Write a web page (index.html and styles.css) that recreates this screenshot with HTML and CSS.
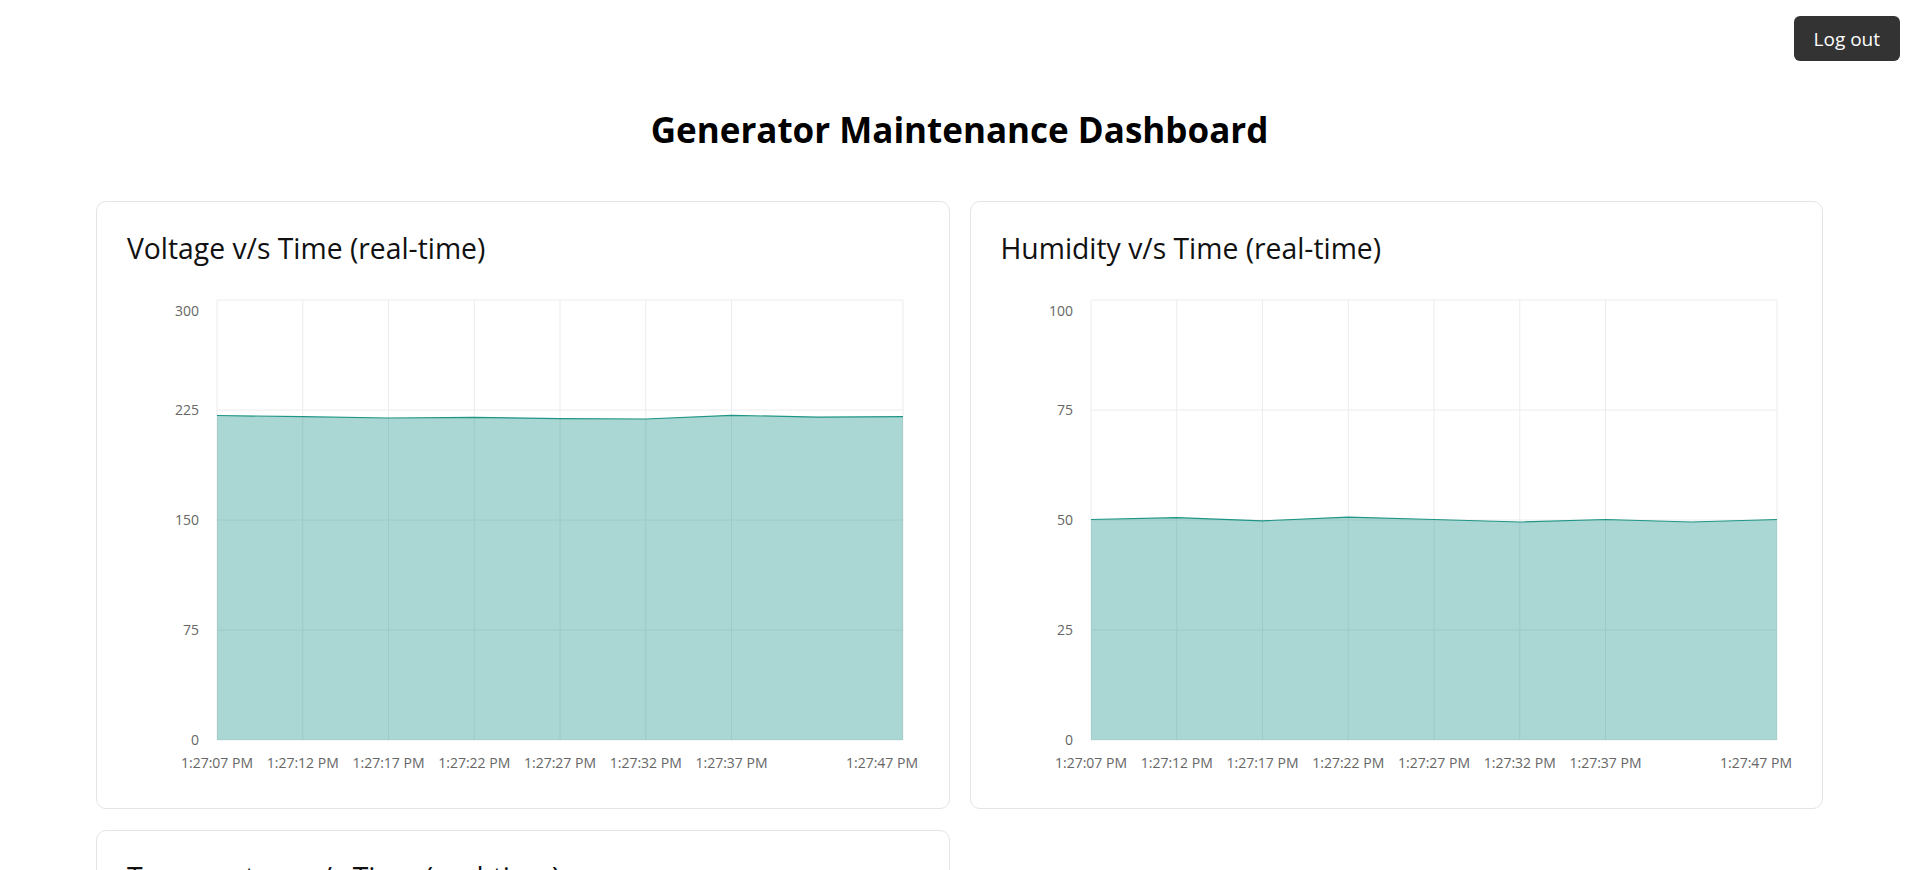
FILE: index.html
```html
<!DOCTYPE html>
<html lang="en">
<head>
<meta charset="utf-8">
<title>Generator Maintenance Dashboard</title>
<link rel="stylesheet" href="styles.css">
</head>
<body>
<header class="topbar">
  <button class="logout">Log out</button>
</header>
<h1 class="page-title">Generator Maintenance Dashboard</h1>
<main class="grid">
  <section class="card">
    <h2 class="card-title">Voltage v/s Time (real-time)</h2>
    <svg class="chart" width="791" height="500">
      <g class="grid-lines">
        <line x1="90" y1="22" x2="776" y2="22"/><line x1="90" y1="132" x2="776" y2="132"/><line x1="90" y1="242" x2="776" y2="242"/><line x1="90" y1="352" x2="776" y2="352"/><line x1="90" y1="462" x2="776" y2="462"/>
        <line x1="90" y1="22" x2="90" y2="462"/><line x1="175.75" y1="22" x2="175.75" y2="462"/><line x1="261.5" y1="22" x2="261.5" y2="462"/><line x1="347.25" y1="22" x2="347.25" y2="462"/><line x1="433" y1="22" x2="433" y2="462"/><line x1="518.75" y1="22" x2="518.75" y2="462"/><line x1="604.5" y1="22" x2="604.5" y2="462"/><line x1="776" y1="22" x2="776" y2="462"/>
      </g>
      <path class="area" d="M90,137.5 L175.75,138.7 L261.5,140 L347.25,139.3 L433,140.6 L518.75,141 L604.5,137.3 L690.25,139.1 L776,138.7 L776,462 L90,462 Z"/>
      <path class="line" d="M90,137.5 L175.75,138.7 L261.5,140 L347.25,139.3 L433,140.6 L518.75,141 L604.5,137.3 L690.25,139.1 L776,138.7"/>
      <g class="y-ticks">
        <text x="72" y="33" dy=".35em">300</text><text x="72" y="132" dy=".35em">225</text><text x="72" y="242" dy=".35em">150</text><text x="72" y="352" dy=".35em">75</text><text x="72" y="462" dy=".35em">0</text>
      </g>
      <g class="x-ticks">
        <text x="90" y="485" dy=".35em">1:27:07 PM</text><text x="175.75" y="485" dy=".35em">1:27:12 PM</text><text x="261.5" y="485" dy=".35em">1:27:17 PM</text><text x="347.25" y="485" dy=".35em">1:27:22 PM</text><text x="433" y="485" dy=".35em">1:27:27 PM</text><text x="518.75" y="485" dy=".35em">1:27:32 PM</text><text x="604.5" y="485" dy=".35em">1:27:37 PM</text><text class="end" x="791" y="485" dy=".35em">1:27:47 PM</text>
      </g>
    </svg>
  </section>
  <section class="card">
    <h2 class="card-title">Humidity v/s Time (real-time)</h2>
    <svg class="chart" width="791" height="500">
      <g class="grid-lines">
        <line x1="90" y1="22" x2="776" y2="22"/><line x1="90" y1="132" x2="776" y2="132"/><line x1="90" y1="242" x2="776" y2="242"/><line x1="90" y1="352" x2="776" y2="352"/><line x1="90" y1="462" x2="776" y2="462"/>
        <line x1="90" y1="22" x2="90" y2="462"/><line x1="175.75" y1="22" x2="175.75" y2="462"/><line x1="261.5" y1="22" x2="261.5" y2="462"/><line x1="347.25" y1="22" x2="347.25" y2="462"/><line x1="433" y1="22" x2="433" y2="462"/><line x1="518.75" y1="22" x2="518.75" y2="462"/><line x1="604.5" y1="22" x2="604.5" y2="462"/><line x1="776" y1="22" x2="776" y2="462"/>
      </g>
      <path class="area" d="M90,241.5 L175.75,239.7 L261.5,242.8 L347.25,239.1 L433,241.5 L518.75,244 L604.5,241.5 L690.25,244 L776,241.5 L776,462 L90,462 Z"/>
      <path class="line" d="M90,241.5 L175.75,239.7 L261.5,242.8 L347.25,239.1 L433,241.5 L518.75,244 L604.5,241.5 L690.25,244 L776,241.5"/>
      <g class="y-ticks">
        <text x="72" y="33" dy=".35em">100</text><text x="72" y="132" dy=".35em">75</text><text x="72" y="242" dy=".35em">50</text><text x="72" y="352" dy=".35em">25</text><text x="72" y="462" dy=".35em">0</text>
      </g>
      <g class="x-ticks">
        <text x="90" y="485" dy=".35em">1:27:07 PM</text><text x="175.75" y="485" dy=".35em">1:27:12 PM</text><text x="261.5" y="485" dy=".35em">1:27:17 PM</text><text x="347.25" y="485" dy=".35em">1:27:22 PM</text><text x="433" y="485" dy=".35em">1:27:27 PM</text><text x="518.75" y="485" dy=".35em">1:27:32 PM</text><text x="604.5" y="485" dy=".35em">1:27:37 PM</text><text class="end" x="791" y="485" dy=".35em">1:27:47 PM</text>
      </g>
    </svg>
  </section>
  <section class="card">
    <h2 class="card-title">Temperature v/s Time (real-time)</h2>
    <svg class="chart" width="791" height="500">
      <g class="grid-lines">
        <line x1="90" y1="22" x2="776" y2="22"/><line x1="90" y1="132" x2="776" y2="132"/><line x1="90" y1="242" x2="776" y2="242"/><line x1="90" y1="352" x2="776" y2="352"/><line x1="90" y1="462" x2="776" y2="462"/>
        <line x1="90" y1="22" x2="90" y2="462"/><line x1="175.75" y1="22" x2="175.75" y2="462"/><line x1="261.5" y1="22" x2="261.5" y2="462"/><line x1="347.25" y1="22" x2="347.25" y2="462"/><line x1="433" y1="22" x2="433" y2="462"/><line x1="518.75" y1="22" x2="518.75" y2="462"/><line x1="604.5" y1="22" x2="604.5" y2="462"/><line x1="776" y1="22" x2="776" y2="462"/>
      </g>
      <path class="area" d="M90,290 L175.75,288 L261.5,291 L347.25,289 L433,292 L518.75,290 L604.5,288 L690.25,291 L776,290 L776,462 L90,462 Z"/>
      <path class="line" d="M90,290 L175.75,288 L261.5,291 L347.25,289 L433,292 L518.75,290 L604.5,288 L690.25,291 L776,290"/>
      <g class="y-ticks">
        <text x="72" y="33" dy=".35em">80</text><text x="72" y="132" dy=".35em">60</text><text x="72" y="242" dy=".35em">40</text><text x="72" y="352" dy=".35em">20</text><text x="72" y="462" dy=".35em">0</text>
      </g>
      <g class="x-ticks">
        <text x="90" y="485" dy=".35em">1:27:07 PM</text><text x="175.75" y="485" dy=".35em">1:27:12 PM</text><text x="261.5" y="485" dy=".35em">1:27:17 PM</text><text x="347.25" y="485" dy=".35em">1:27:22 PM</text><text x="433" y="485" dy=".35em">1:27:27 PM</text><text x="518.75" y="485" dy=".35em">1:27:32 PM</text><text x="604.5" y="485" dy=".35em">1:27:37 PM</text><text class="end" x="791" y="485" dy=".35em">1:27:47 PM</text>
      </g>
    </svg>
  </section>
</main>
</body>
</html>
```

FILE: styles.css
```css
* { box-sizing: border-box; }

body {
  margin: 0;
  background: #fff;
  color: #111;
  font-family: "Open Sans", "Noto Sans", sans-serif;
}

.topbar {
  display: flex;
  justify-content: flex-end;
  padding: 16px 19px 0;
}

.logout {
  height: 45px;
  padding: 0 20px;
  border: none;
  border-radius: 6px;
  background: #333;
  color: #fff;
  font-family: "Open Sans", "Noto Sans", sans-serif;
  font-size: 19px;
  line-height: 24px;
  cursor: pointer;
}

.page-title {
  margin: 47px 0 49px;
  text-align: center;
  font-size: 35px;
  line-height: 44px;
  font-weight: 700;
  color: #000;
}

.grid {
  width: 90%;
  margin: 0 auto;
  display: grid;
  grid-template-columns: 1fr 1fr;
  gap: 21px 20px;
}

.card {
  border: 1px solid #e4e4e4;
  border-radius: 10px;
  padding: 30px;
  background: #fff;
}

.card-title {
  margin: 0 0 14px;
  font-size: 28.3px;
  line-height: 32px;
  font-weight: 400;
  color: #111;
}

.chart {
  display: block;
  width: 100%;
  height: 500px;
  overflow: visible;
}

.grid-lines line {
  stroke: #ececec;
  stroke-width: 1;
}

.area {
  fill: #00877a;
  fill-opacity: 0.333;
}

.line {
  fill: none;
  stroke: #1f9585;
  stroke-width: 1.2;
}

.y-ticks text,
.x-ticks text {
  font-family: "Open Sans", "Noto Sans", sans-serif;
  font-size: 14px;
  fill: #666;
}

.y-ticks text { text-anchor: end; }
.x-ticks text { text-anchor: middle; }
.x-ticks text.end { text-anchor: end; }
```
